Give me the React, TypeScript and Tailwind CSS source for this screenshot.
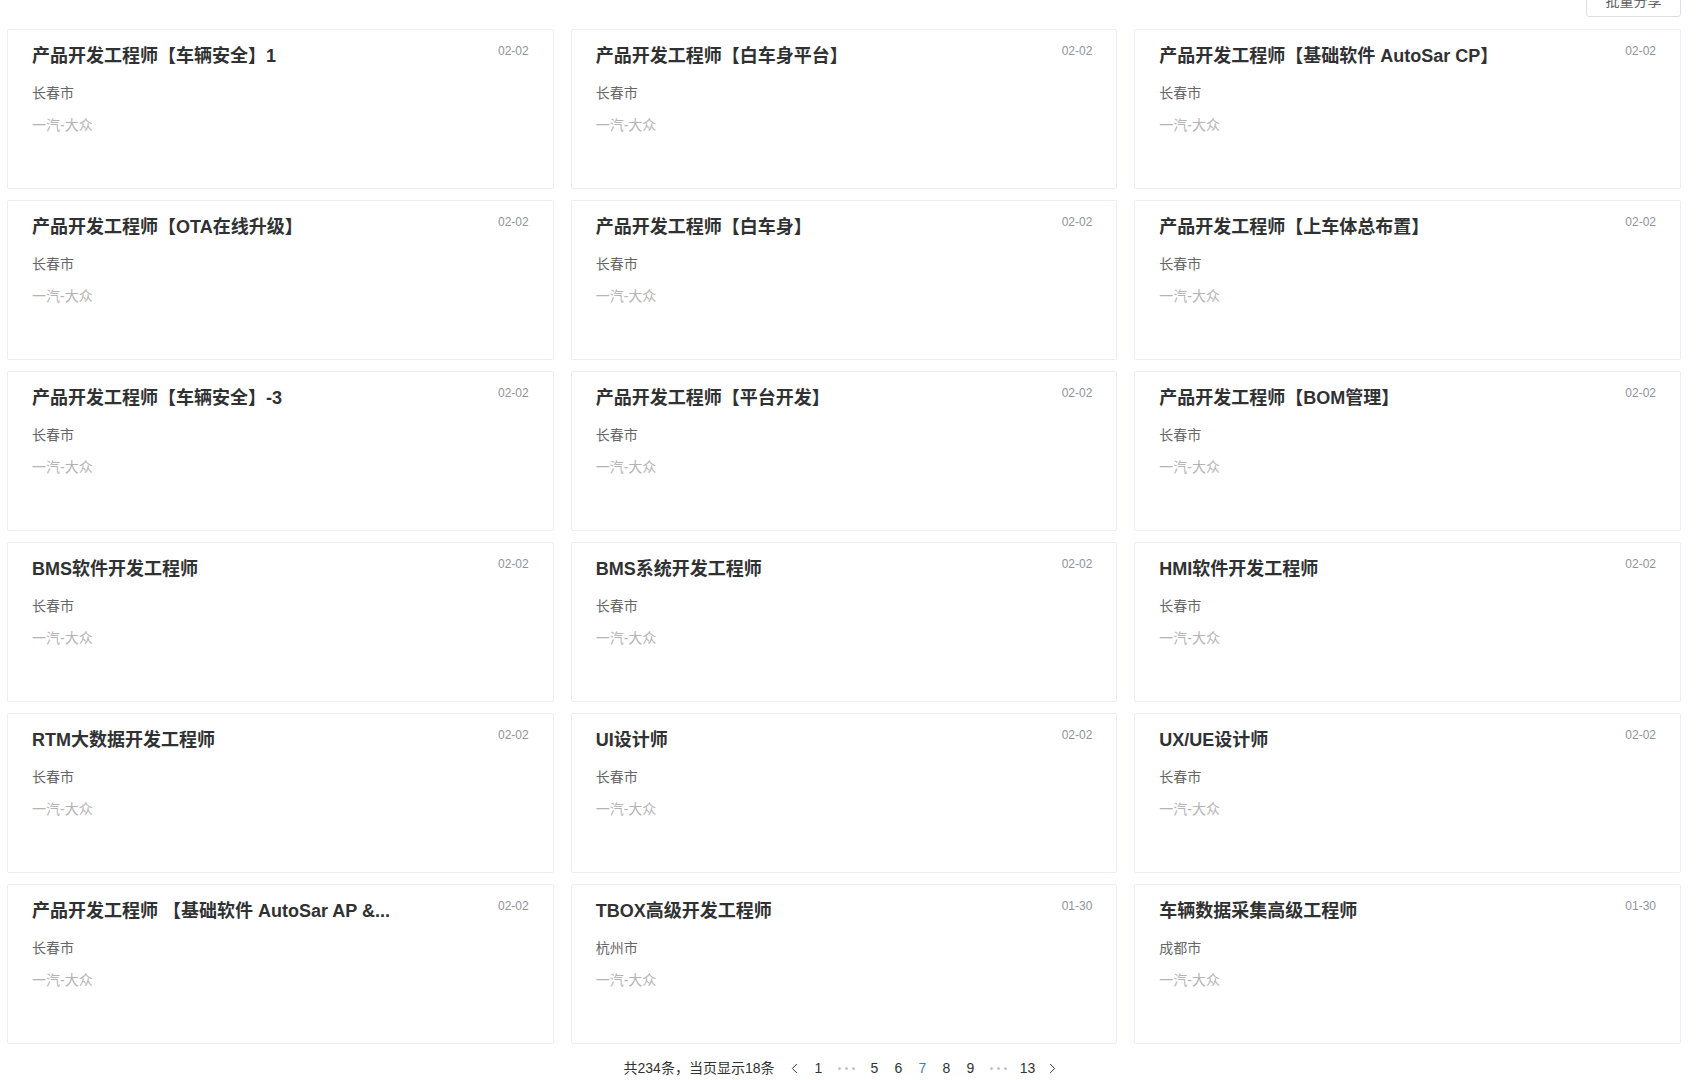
import React from "react";
import { ChevronLeft, ChevronRight } from "lucide-react";

type Job = { title: string; date: string; city: string; company: string };

const jobs: Job[] = [
  { title: "产品开发工程师【车辆安全】1", date: "02-02", city: "长春市", company: "一汽-大众" },
  { title: "产品开发工程师【白车身平台】", date: "02-02", city: "长春市", company: "一汽-大众" },
  { title: "产品开发工程师【基础软件 AutoSar CP】", date: "02-02", city: "长春市", company: "一汽-大众" },
  { title: "产品开发工程师【OTA在线升级】", date: "02-02", city: "长春市", company: "一汽-大众" },
  { title: "产品开发工程师【白车身】", date: "02-02", city: "长春市", company: "一汽-大众" },
  { title: "产品开发工程师【上车体总布置】", date: "02-02", city: "长春市", company: "一汽-大众" },
  { title: "产品开发工程师【车辆安全】-3", date: "02-02", city: "长春市", company: "一汽-大众" },
  { title: "产品开发工程师【平台开发】", date: "02-02", city: "长春市", company: "一汽-大众" },
  { title: "产品开发工程师【BOM管理】", date: "02-02", city: "长春市", company: "一汽-大众" },
  { title: "BMS软件开发工程师", date: "02-02", city: "长春市", company: "一汽-大众" },
  { title: "BMS系统开发工程师", date: "02-02", city: "长春市", company: "一汽-大众" },
  { title: "HMI软件开发工程师", date: "02-02", city: "长春市", company: "一汽-大众" },
  { title: "RTM大数据开发工程师", date: "02-02", city: "长春市", company: "一汽-大众" },
  { title: "UI设计师", date: "02-02", city: "长春市", company: "一汽-大众" },
  { title: "UX/UE设计师", date: "02-02", city: "长春市", company: "一汽-大众" },
  { title: "产品开发工程师 【基础软件 AutoSar AP &...", date: "02-02", city: "长春市", company: "一汽-大众" },
  { title: "TBOX高级开发工程师", date: "01-30", city: "杭州市", company: "一汽-大众" },
  { title: "车辆数据采集高级工程师", date: "01-30", city: "成都市", company: "一汽-大众" },
];

function Dots() {
  return (
    <span className="flex w-[32px] items-center justify-center gap-[4px]">
      <span className="h-[3px] w-[3px] rounded-full bg-[#c0c4cc]" />
      <span className="h-[3px] w-[3px] rounded-full bg-[#c0c4cc]" />
      <span className="h-[3px] w-[3px] rounded-full bg-[#c0c4cc]" />
    </span>
  );
}

function Card({ job }: { job: Job }) {
  return (
    <div className="h-[160px] rounded-[2px] border border-[#ebeef5] bg-white px-[24px] pt-[13px]">
      <div className="flex items-start justify-between gap-4">
        <div className="whitespace-nowrap text-[18px] font-bold leading-[26px] text-[#303133]">
          {job.title}
        </div>
        <div className="shrink-0 pt-[1px] text-[12px] leading-[14px] text-[#909399]">{job.date}</div>
      </div>
      <div className="mt-[14px] text-[14px] leading-[20px] text-[#666666]">{job.city}</div>
      <div className="mt-[12px] text-[14px] leading-[20px] text-[#b4b4b4]">{job.company}</div>
    </div>
  );
}

export default function App() {
  return (
    <div
      className="min-h-[1080px] overflow-hidden bg-white pl-[7px] pr-[16px]"
      style={{ fontFamily: '"Liberation Sans", "Noto Sans CJK SC", sans-serif' }}
    >
      <div className="flex h-[17px] justify-end">
        <button className="-mt-[15px] h-[32px] w-[95px] rounded-[3px] border border-[#dcdfe6] bg-white text-[14px] text-[#606266]">
          批量分享
        </button>
      </div>
      <div className="mt-[12px] grid grid-cols-3 gap-x-[17px] gap-y-[11px]">
        {jobs.map((j, i) => (
          <Card key={i} job={j} />
        ))}
      </div>
      <div className="mt-[12px] flex h-[24px] items-center justify-center text-[14px] text-[#333333]">
        <span className="mr-[8px] text-[#303133]">共234条，当页显示18条</span>
        <span className="flex w-[24px] justify-center">
          <ChevronLeft className="h-[17px] w-[17px]" strokeWidth={1.4} />
        </span>
        <span className="w-[24px] text-center">1</span>
        <Dots />
        <span className="w-[24px] text-center">5</span>
        <span className="w-[24px] text-center">6</span>
        <span className="w-[24px] text-center text-[#3f7dc4]">7</span>
        <span className="w-[24px] text-center">8</span>
        <span className="w-[24px] text-center">9</span>
        <Dots />
        <span className="w-[26px] text-center">13</span>
        <span className="flex w-[24px] justify-center">
          <ChevronRight className="h-[17px] w-[17px]" strokeWidth={1.4} />
        </span>
      </div>
    </div>
  );
}
